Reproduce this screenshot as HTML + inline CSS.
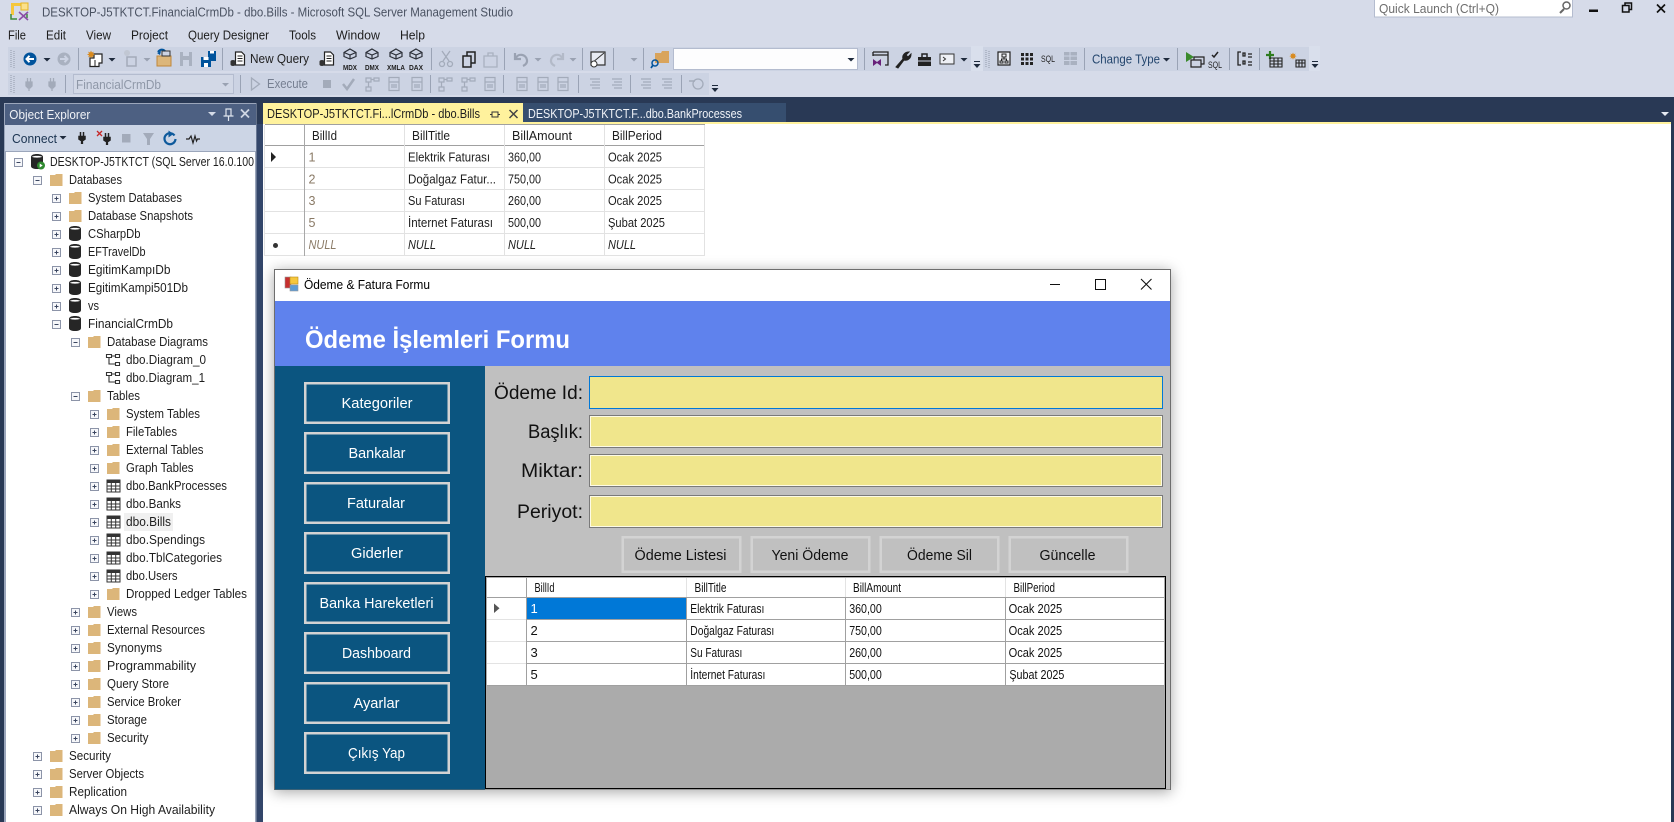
<!DOCTYPE html>
<html lang="tr">
<head>
<meta charset="utf-8">
<title>DESKTOP-J5TKTCT.FinancialCrmDb - dbo.Bills - Microsoft SQL Server Management Studio</title>
<style>
html,body{margin:0;padding:0;background:#fff;width:1674px;height:822px;overflow:hidden}
svg{display:block}
text{font-family:"Liberation Sans","Noto Sans CJK JP",sans-serif;font-size:12.5px;fill:#1e1e1e;white-space:pre}
.ti{fill:#4a5262}
.gr{fill:#8f98a8}
.dk{fill:#1a3350}
.id{fill:#8a7a66}
.it{font-style:italic}
.nb{font-style:italic;fill:#8a7a66}
.wh{fill:#fff;font-size:14.5px}
.lb{fill:#111;font-size:19px}
.ab{fill:#111;font-size:14.5px}
.c{font-size:13px;fill:#111}
.h{font-size:12.5px;fill:#111}
.s{stroke:#9aa3b5;stroke-width:1}
</style>
</head>
<body>
<svg xmlns="http://www.w3.org/2000/svg" width="1674" height="822" viewBox="0 0 1674 822">
<defs>
<symbol id="fo" width="16" height="16" viewBox="0 0 16 16"><path d="M1 15V2h6l1-1h7.500v14z" fill="#fff" opacity=".7"/><path d="M2 4V3h5l1-1h6.500v12H2z" fill="#dcb67a"/></symbol>
<symbol id="db" width="16" height="18" viewBox="0 0 16 18"><path d="M2 4c0-2 2.500-3 6-3s6 1 6 3v9c0 2-2.500 3-6 3s-6-1-6-3z" fill="#262626"/><path d="M3 3.800c1-1.300 9-1.300 10 0-1 1.100-9 1.100-10 0z" fill="#fff"/></symbol>
<symbol id="tb" width="16" height="16" viewBox="0 0 16 16"><path d="M2 2h13v12H2z" fill="#fff" stroke="#333" stroke-width="1"/><path d="M2 2h13v3H2z" fill="#333"/><path d="M2 8h13M2 11h13M6.300 5v9M10.700 5v9" stroke="#333" stroke-width="1" fill="none"/></symbol>
<symbol id="dg" width="16" height="16" viewBox="0 0 16 16"><path d="M1.500 2.500h5v3h-5zM10.500 2.500h4v3h-4zM10.500 10.500h4v3h-4zM4 5.500V12h6.500M6.500 4h4" fill="#fff" stroke="#333" stroke-width="1.100"/></symbol>
<symbol id="pl" width="11" height="11" viewBox="0 0 11 11"><rect x="1.500" y="1.500" width="8" height="8" fill="#f6f7fa" stroke="#8c94a8"/><path d="M3.500 5.500h4M5.500 3.500v4" stroke="#3b4660" stroke-width="1"/></symbol>
<symbol id="mi" width="11" height="11" viewBox="0 0 11 11"><rect x="1.500" y="1.500" width="8" height="8" fill="#f6f7fa" stroke="#8c94a8"/><path d="M3.500 5.500h4" stroke="#3b4660" stroke-width="1"/></symbol>
<symbol id="drp" width="8" height="4" viewBox="0 0 8 4"><path d="M0 0h7L3.500 3.500z" fill="#1e2a3c"/></symbol>
<symbol id="drg" width="8" height="4" viewBox="0 0 8 4"><path d="M0 0h7L3.500 3.500z" fill="#9aa2b2"/></symbol>
<symbol id="ov" width="8" height="8" viewBox="0 0 8 8"><path d="M1 .5h6" stroke="#1e2a3c" stroke-width="1"/><path d="M.5 3h7L4 7z" fill="#1e2a3c"/></symbol>
<symbol id="gp" width="6" height="20" viewBox="0 0 6 20"><path d="M1 1v18M4 2v17" stroke="#a0a8b8" stroke-width="1.300" stroke-dasharray="1 1" fill="none"/></symbol>
<symbol id="cube" width="18" height="18" viewBox="0 0 18 18"><path d="M9 1l6 3.500v4L9 11 3 8.500v-4zM3 4.500L9 7l6-2.500M9 7v4" fill="none" stroke="#2b2f38" stroke-width="1.200"/></symbol>
<symbol id="page" width="18" height="18" viewBox="0 0 18 18"><path d="M6.500 2h6l3 3v10h-9z" fill="#fff" stroke="#222" stroke-width="1.200"/><path d="M8.500 6h5M8.500 8.500h5M8.500 11h5" stroke="#222"/><path d="M1.500 11.500c0-2 5-2 5 0v3c0 2-5 2-5 0z" fill="#333"/></symbol>
<symbol id="gbox" width="16" height="16" viewBox="0 0 16 16"><path d="M2 2h5v4H2zM10 2h5v3h-5zM2 11h5v4H2zM4.500 6v5M7 3.500h3" fill="none" stroke="#a3abba" stroke-width="1.200"/></symbol>
<symbol id="gdoc" width="16" height="16" viewBox="0 0 16 16"><path d="M3 1.500h10v13H3zM5 9h6M5 11h6M3 6h10" fill="none" stroke="#a3abba" stroke-width="1.200"/></symbol>
<symbol id="glist" width="16" height="16" viewBox="0 0 16 16"><path d="M4 3h10M6 6h8M4 9h10M6 12h8" fill="none" stroke="#a3abba" stroke-width="1.300"/></symbol>
<symbol id="gplug" width="16" height="16" viewBox="0 0 16 16"><path d="M5 6h6v4l-2 2H7L5 10zM8 12v3M6.500 2v4M9.500 2v4" fill="#a3abba" stroke="#a3abba" stroke-width="1.300"/></symbol>
<symbol id="plug" width="12" height="14" viewBox="0 0 16 18"><path d="M3 6h10v5l-3 2H6l-3-2zM6.500 13h3v4h-3zM5 1h2v5H5zM9 1h2v5H9z" fill="#222"/></symbol>
</defs>

<!-- app background -->
<rect width="1674" height="97" fill="#d6dbe9"/>
<rect y="97" width="1674" height="725" fill="#293955"/>
<rect x="256" y="124" width="7" height="698" fill="#33466a"/>
<rect x="263" y="124" width="1408" height="698" fill="#fff"/>

<!-- title bar -->
<g>
<path d="M11 3h14v3h-11v9h-3z" fill="#f5c73d"/>
<path d="M21 3h7v7h-7z" fill="#fbe08a" stroke="#e6b422"/>
<path d="M11 14v5h6M27 14v4" stroke="#3c8a3c" stroke-width="1.500" fill="none"/>
<path d="M19 12l9 8M28 12l-9 8" stroke="#8b4ea6" stroke-width="1.600"/>
</g>
<text class="ti" x="42" y="16.500" textLength="471" lengthAdjust="spacingAndGlyphs">DESKTOP-J5TKTCT.FinancialCrmDb - dbo.Bills - Microsoft SQL Server Management Studio</text>
<rect x="1374.500" y="-1" width="198" height="18" fill="#fff" stroke="#b4bccf"/>
<text x="1379" y="13" style="fill:#6d6d6d" textLength="120" lengthAdjust="spacingAndGlyphs">Quick Launch (Ctrl+Q)</text>
<path d="M1560 13l4-4" stroke="#666" stroke-width="2"/><circle cx="1566.500" cy="5.500" r="3.500" fill="none" stroke="#666" stroke-width="1.500"/>
<rect x="1589" y="9.500" width="9" height="2.500" fill="#111"/>
<path d="M1622.500 5.500h6.500v6.500h-6.500z" fill="none" stroke="#111" stroke-width="1.500"/><path d="M1625 5V3h6.500v6.500h-2.500" fill="none" stroke="#111" stroke-width="1.500"/>
<path d="M1657 4.500l8 8M1665 4.500l-8 8" stroke="#111" stroke-width="1.700"/>

<!-- menu -->
<text x="8" y="39.500" textLength="18" lengthAdjust="spacingAndGlyphs">File</text>
<text x="46" y="39.500" textLength="20" lengthAdjust="spacingAndGlyphs">Edit</text>
<text x="86" y="39.500" textLength="25" lengthAdjust="spacingAndGlyphs">View</text>
<text x="131" y="39.500" textLength="37" lengthAdjust="spacingAndGlyphs">Project</text>
<text x="188" y="39.500" textLength="81" lengthAdjust="spacingAndGlyphs">Query Designer</text>
<text x="289" y="39.500" textLength="27" lengthAdjust="spacingAndGlyphs">Tools</text>
<text x="336" y="39.500" textLength="44" lengthAdjust="spacingAndGlyphs">Window</text>
<text x="400" y="39.500" textLength="25" lengthAdjust="spacingAndGlyphs">Help</text>

<!-- toolbars -->
<rect x="8" y="47" width="963" height="24" fill="#ccd3e3"/>
<rect x="971" y="46" width="12" height="25" fill="#d9dfec"/>
<rect x="983" y="47" width="326" height="24" fill="#ccd3e3"/>
<rect x="1309" y="46" width="11" height="25" fill="#d9dfec"/>
<rect x="8" y="73" width="701" height="22" fill="#ccd3e3"/>

<use href="#gp" x="10" y="49"/>
<circle cx="30" cy="59" r="6.500" fill="#00539c"/><path d="M34 59h-7M29.500 55.800L26.500 59l3 3.200" stroke="#fff" stroke-width="2" fill="none"/>
<use href="#drp" x="43.500" y="58"/>
<circle cx="64" cy="59" r="6.500" fill="#a9b1c0"/><path d="M60 59h7M64.500 55.800l3 3.200-3 3.200" stroke="#ccd3e3" stroke-width="2" fill="none"/>
<path class="s" d="M78.500 48v22M222.500 48v22M431.500 48v22M504.500 48v22M582.500 48v22M613.500 48v22M643.500 48v22M864.500 48v22M1084.500 48v22M1177.500 48v22M1229.500 48v22M1259.500 48v22"/>
<path d="M90 58h4v-4h8v9h-3v3.500h-9z" fill="#fff" stroke="#222" stroke-width="1.200"/><path d="M95 60v6.500" stroke="#222"/><path d="M91 50.500l.9 2 2-.9-.9 2 2 .9-2 .9.9 2-2-.9-.9 2-.9-2-2 .9.9-2-2-.9 2-.9-.9-2 2 .9z" fill="#d88a1e"/>
<use href="#drp" x="108.500" y="58"/>
<path d="M127 57h9v9h-9z" fill="none" stroke="#a3abba" stroke-width="1.500"/><circle cx="127" cy="53" r="3" fill="#c1c7d3"/>
<use href="#drg" x="143.500" y="58"/>
<path d="M157 56h14v10h-14z" fill="#dcb67a" stroke="#c0873a"/><path d="M158 52c2-3 5-3 7-1" stroke="#00539c" stroke-width="2" fill="none"/><path d="M157 53l4-2-1 4z" fill="#00539c"/><path d="M162 51h8v5h-8z" fill="none" stroke="#333"/>
<path d="M180 52h12v14h-12z" fill="#a9b1c0"/><path d="M183 52h6v4h-6z" fill="#ccd3e3"/><path d="M183 60h6v6h-6z" fill="#ccd3e3"/>
<path d="M201 57h10v10h-10z" fill="#00539c"/><path d="M203.500 57h5v3h-5zM204 63h4v4h-4z" fill="#fff"/><path d="M208 51h8v10h-5v-4h-3z" fill="#00539c"/><path d="M210 51h4v2.500h-4z" fill="#fff"/>
<use href="#page" x="229" y="50"/>
<text x="250" y="63" textLength="59" lengthAdjust="spacingAndGlyphs">New Query</text>
<use href="#page" x="318" y="50"/>
<g>
<use href="#cube" x="341" y="48"/><text x="343" y="70" textLength="14" lengthAdjust="spacingAndGlyphs" style="font-size:7px;font-weight:bold">MDX</text>
<use href="#cube" x="363" y="48"/><text x="365" y="70" textLength="14" lengthAdjust="spacingAndGlyphs" style="font-size:7px;font-weight:bold">DMX</text>
<use href="#cube" x="387" y="48"/><text x="387" y="70" textLength="18" lengthAdjust="spacingAndGlyphs" style="font-size:7px;font-weight:bold">XMLA</text>
<use href="#cube" x="407" y="48"/><text x="409" y="70" textLength="14" lengthAdjust="spacingAndGlyphs" style="font-size:7px;font-weight:bold">DAX</text>
</g>
<g fill="none" stroke="#a3abba" stroke-width="1.300"><path d="M442 51l7 10M450 51l-7 10"/><circle cx="442" cy="64" r="2.500"/><circle cx="450" cy="64" r="2.500"/></g>
<path d="M463 56h8v11h-8zM467 56v-4h8v11h-4" fill="none" stroke="#222" stroke-width="1.500"/>
<path d="M484 56h13v11h-13zM488 56v-3h5v3" fill="none" stroke="#a9b1c0" stroke-width="1.300"/>
<path d="M515 53v6h6M516 58c2-5 10-4 11 2 .5 3-2 5-4 6" fill="none" stroke="#9aa2b2" stroke-width="2.200"/>
<use href="#drg" x="534.500" y="58"/>
<path d="M563 53v6h-6M562 58c-2-5-10-4-11 2-.5 3 2 5 4 6" fill="none" stroke="#b3bac8" stroke-width="2.200"/>
<use href="#drg" x="569.500" y="58"/>
<path d="M591 52h14v13h-14z" fill="#e8ebf3" stroke="#333" stroke-width="1.200"/><path d="M592 63l12-10" stroke="#333"/><circle cx="594" cy="64" r="3" fill="#fff" stroke="#333"/>
<use href="#drg" x="630.500" y="58"/>
<path d="M655 53h6l1-2h7v12h-14z" fill="#d9a45c"/><circle cx="655" cy="63" r="3" fill="none" stroke="#00539c" stroke-width="1.500"/><path d="M653 65l-2 3" stroke="#00539c" stroke-width="1.700"/>
<rect x="673.500" y="48.500" width="184" height="21" fill="#fdfdfe" stroke="#b4bccf"/>
<use href="#drp" x="847.500" y="58"/>
<path d="M873 52h15v13h-3M873 55h15M873 52v4" fill="none" stroke="#222" stroke-width="1.300"/><path d="M873 59l4 3 4-3v7l-4-3-4 3z" fill="#68217a"/>
<path d="M896 67l7-8c-1-3 1-7 6-7l-3 3 2 2 3-3c0 5-4 7-7 6l-6 8z" fill="#222" stroke="#222"/>
<path d="M918 57h13v9h-13z" fill="#222"/><path d="M922 57v-3h5v3" stroke="#222" fill="none" stroke-width="1.500"/><path d="M918 61h13" stroke="#ccd3e3"/>
<path d="M940 54h14v10h-14z" fill="#eef0f5" stroke="#333"/><path d="M943 57l2.500 2-2.500 2" stroke="#333" fill="none"/>
<use href="#drp" x="960.500" y="58"/>
<use href="#ov" x="973" y="61"/>
<use href="#gp" x="985" y="49"/>
<path d="M998 52h12v13h-12z" fill="#eef0f5" stroke="#222" stroke-width="1.200"/><path d="M1002 54h4v3h-4zM1000 61h3v2h-3zM1005 61h3v2h-3zM1004 57v2M1001.500 61v-2h5v2" stroke="#222" fill="none"/>
<path d="M1021 53h3v3h-3zM1025.500 53h3v3h-3zM1030 53h3v3h-3zM1021 57.500h3v3h-3zM1025.500 57.500h3v3h-3zM1030 57.500h3v3h-3zM1021 62h3v3h-3zM1025.500 62h3v3h-3zM1030 62h3v3h-3z" fill="#222"/>
<text x="1041" y="62" textLength="14" lengthAdjust="spacingAndGlyphs" style="font-size:9px">SQL</text>
<path d="M1064 52h13v13h-13z" fill="#a9b1c0"/><path d="M1064 56h13M1064 60.500h13M1070 52v13" stroke="#ccd3e3"/>
<text style="fill:#24466e" x="1092" y="63.500" textLength="68" lengthAdjust="spacingAndGlyphs">Change Type</text>
<use href="#drp" x="1163" y="58"/>
<path d="M1186 52l8 5-8 5z" fill="#3a8a2c"/><path d="M1191 60h10v7h-10zM1194 60v-3h10v7h-3" fill="none" stroke="#222" stroke-width="1.200"/>
<path d="M1212 55l2 2 4-5" fill="none" stroke="#222" stroke-width="1.500"/>
<text x="1208" y="68" textLength="14" lengthAdjust="spacingAndGlyphs" style="font-size:9px">SQL</text>
<path d="M1241 52h-3v13h3M1243 53h2v3h-2zM1243 61h2v3h-2zM1248 54h4M1248 62h4M1248 57h4M1248 65h4" fill="none" stroke="#222" stroke-width="1.300"/>
<path d="M1270 51v8M1266 55h8" stroke="#2e7d1e" stroke-width="2.200"/>
<path d="M1270 58h12v9h-12zM1270 61h12M1270 64h12M1274 58v9M1278 58v9" fill="none" stroke="#222" stroke-width="1.100"/>
<path d="M1293 52.500l.8 1.800 1.800-.8-.8 1.800 1.800.8-1.800.8.8 1.800-1.800-.8-.8 1.800-.8-1.800-1.800.8.8-1.800-1.800-.8 1.800-.8-.8-1.800 1.800.8z" fill="#d88a1e"/>
<path d="M1296 60h9v7h-9zM1296 63h9M1299 60v7M1302 60v7" fill="none" stroke="#222" stroke-width="1.100"/>
<use href="#ov" x="1311" y="61"/>

<!-- toolbar 2 -->
<use href="#gp" x="10" y="74"/>
<use href="#gplug" x="21" y="76"/>
<use href="#gplug" x="44" y="76"/>
<path class="s" d="M65.500 75v18M240.500 75v18M430.500 75v18M503.500 75v18M578.500 75v18M630.500 75v18M681.500 75v18"/>
<rect x="73.500" y="74.500" width="160" height="19" fill="#d2d8e6" stroke="#b4bccf"/>
<text class="gr" x="76" y="89" textLength="85" lengthAdjust="spacingAndGlyphs">FinancialCrmDb</text>
<use href="#drg" x="222" y="83"/>
<path d="M251.500 78l8 6-8 6z" fill="none" stroke="#a3abba" stroke-width="1.300"/>
<text x="267" y="88" textLength="41" lengthAdjust="spacingAndGlyphs" style="fill:#767f91">Execute</text>
<rect x="323" y="80" width="8" height="8" fill="#a3abba"/>
<path d="M343 84l4 5 7-10" fill="none" stroke="#a3abba" stroke-width="2.500"/>
<use href="#gbox" x="364" y="76"/><use href="#gdoc" x="386" y="76"/><use href="#gdoc" x="409" y="76"/>
<use href="#gbox" x="437" y="76"/><use href="#gbox" x="460" y="76"/><use href="#gdoc" x="482" y="76"/>
<use href="#gdoc" x="514" y="76"/><use href="#gdoc" x="535" y="76"/><use href="#gdoc" x="555" y="76"/>
<use href="#glist" x="586" y="76"/><use href="#glist" x="608" y="76"/>
<use href="#glist" x="637" y="76"/><use href="#glist" x="658" y="76"/>
<circle cx="698" cy="84" r="5" fill="none" stroke="#a3abba" stroke-width="1.300"/><path d="M689 81h6" stroke="#a3abba" stroke-width="1.500"/>
<use href="#ov" x="711" y="85"/>

<!-- document tabs -->
<rect x="263" y="103" width="260" height="20" fill="#fff29d"/>
<rect x="523" y="103" width="263" height="19" fill="#364e6f"/>
<rect x="263" y="122" width="1408" height="2" fill="#fff29d"/>
<text x="267" y="118" textLength="213" lengthAdjust="spacingAndGlyphs">DESKTOP-J5TKTCT.Fi...lCrmDb - dbo.Bills</text>
<path d="M492 111.500v6M492 114.500h-2M492 112h6v5h-6M498 114.500h2" stroke="#333" fill="none"/>
<path d="M509.500 110l8 8M517.500 110l-8 8" stroke="#444" stroke-width="1.500"/>
<text x="528" y="118" textLength="214" lengthAdjust="spacingAndGlyphs" style="fill:#f0f3f8">DESKTOP-J5TKTCT.F...dbo.BankProcesses</text>
<path d="M1661 112h8l-4 4z" fill="#e6eaf2"/>

<!-- top results grid -->
<g>
<path d="M265 124.500h440" stroke="#a0a0a0"/>
<path d="M265 145.500h440" stroke="#a0a0a0"/>
<path d="M265 167.500h440M265 189.500h440M265 211.500h440M265 233.500h440M265 255.500h440" stroke="#e2e2e2"/>
<path d="M404.500 125v131M504.500 125v131M604.500 125v131M704.500 125v131M264.500 125v131" stroke="#e2e2e2"/>
<path d="M304.500 125v131" stroke="#a8a8a8"/>
<text x="312" y="140" textLength="25" lengthAdjust="spacingAndGlyphs">BillId</text>
<text x="412" y="140" textLength="38" lengthAdjust="spacingAndGlyphs">BillTitle</text>
<text x="512" y="140" textLength="60" lengthAdjust="spacingAndGlyphs">BillAmount</text>
<text x="612" y="140" textLength="50" lengthAdjust="spacingAndGlyphs">BillPeriod</text>
<path d="M271 152v10l5-5z" fill="#222"/>
<circle cx="275.500" cy="245.500" r="2.500" fill="#333"/>
<text class="id" x="308.500" y="161.500">1</text><text class="id" x="308.500" y="183.500">2</text><text class="id" x="308.500" y="205">3</text><text class="id" x="308.500" y="227">5</text>
<text x="408" y="161.500" textLength="82" lengthAdjust="spacingAndGlyphs">Elektrik Faturası</text>
<text x="408" y="183.500" textLength="88" lengthAdjust="spacingAndGlyphs">Doğalgaz Fatur...</text>
<text x="408" y="205" textLength="57" lengthAdjust="spacingAndGlyphs">Su Faturası</text>
<text x="408" y="227" textLength="85" lengthAdjust="spacingAndGlyphs">İnternet Faturası</text>
<text x="508" y="161.500" textLength="33" lengthAdjust="spacingAndGlyphs">360,00</text>
<text x="508" y="183.500" textLength="33" lengthAdjust="spacingAndGlyphs">750,00</text>
<text x="508" y="205" textLength="33" lengthAdjust="spacingAndGlyphs">260,00</text>
<text x="508" y="227" textLength="33" lengthAdjust="spacingAndGlyphs">500,00</text>
<text x="608" y="161.500" textLength="54" lengthAdjust="spacingAndGlyphs">Ocak 2025</text>
<text x="608" y="183.500" textLength="54" lengthAdjust="spacingAndGlyphs">Ocak 2025</text>
<text x="608" y="205" textLength="54" lengthAdjust="spacingAndGlyphs">Ocak 2025</text>
<text x="608" y="227" textLength="57" lengthAdjust="spacingAndGlyphs">Şubat 2025</text>
<text class="nb" x="308.500" y="249" textLength="28" lengthAdjust="spacingAndGlyphs">NULL</text>
<text class="it" x="408" y="249" textLength="28" lengthAdjust="spacingAndGlyphs">NULL</text>
<text class="it" x="508" y="249" textLength="28" lengthAdjust="spacingAndGlyphs">NULL</text>
<text class="it" x="608" y="249" textLength="28" lengthAdjust="spacingAndGlyphs">NULL</text>
</g>

<!-- object explorer -->
<rect x="4" y="103" width="252.500" height="719" fill="#9ba6bb"/>
<rect x="5" y="104" width="251" height="21" fill="#4d6082"/>
<rect x="5" y="125" width="251" height="26" fill="#ccd5e5"/>
<rect x="6" y="152" width="249" height="670" fill="#fff"/>
<text x="9.300" y="119" textLength="81" lengthAdjust="spacingAndGlyphs" style="fill:#f0f2f7;font-size:13px">Object Explorer</text>
<path d="M208 112h8l-4 4z" fill="#d5dbe7"/>
<path d="M226 109h5v7h-5zM223.500 116h10M228.500 116v5" stroke="#e0e5ee" stroke-width="1.200" fill="none"/>
<path d="M241 109.500l8 8M249 109.500l-8 8" stroke="#cfd6e3" stroke-width="1.800"/>
<text class="dk" x="12" y="143" textLength="45" lengthAdjust="spacingAndGlyphs">Connect</text>
<use href="#drp" x="59.500" y="136"/>
<use href="#plug" x="76" y="131"/>
<path d="M97 131l5 5M102 131l-5 5" stroke="#c62828" stroke-width="1.300"/>
<use href="#plug" x="101" y="132"/>
<rect x="122" y="134" width="8.500" height="8.500" fill="#a3abba"/>
<path d="M143 133h11l-4 6v6h-3v-6z" fill="#a3abba"/>
<path d="M174.500 135.500a5.500 5.500 0 1 0 1 3.500" fill="none" stroke="#0e5a9c" stroke-width="2.200"/><path d="M168.500 130.500v7l5-3.500z" fill="#0e5a9c"/>
<path d="M186 139h3l2-3 2 7 2-7 1.500 5 1-2h2.500" fill="none" stroke="#222" stroke-width="1.200"/>

<!-- tree -->
<g>
<use href="#mi" x="13" y="157"/>
<use href="#db" x="29" y="153"/>
<circle cx="41" cy="165.500" r="4" fill="#2f8a2f"/><path d="M39.700 163.500l3 2-3 2z" fill="#fff"/>
<text x="50" y="166" textLength="204" lengthAdjust="spacingAndGlyphs">DESKTOP-J5TKTCT (SQL Server 16.0.100</text>

<use href="#mi" x="32" y="175"/><use href="#fo" x="48" y="172"/><text x="69" y="184" textLength="53" lengthAdjust="spacingAndGlyphs">Databases</text>

<use href="#pl" x="51" y="193"/><use href="#fo" x="67" y="190"/><text x="88" y="202" textLength="94" lengthAdjust="spacingAndGlyphs">System Databases</text>
<use href="#pl" x="51" y="211"/><use href="#fo" x="67" y="208"/><text x="88" y="220" textLength="105" lengthAdjust="spacingAndGlyphs">Database Snapshots</text>
<use href="#pl" x="51" y="229"/><use href="#db" x="67" y="225"/><text x="88" y="238" textLength="52.500" lengthAdjust="spacingAndGlyphs">CSharpDb</text>
<use href="#pl" x="51" y="247"/><use href="#db" x="67" y="243"/><text x="88" y="256" textLength="57.500" lengthAdjust="spacingAndGlyphs">EFTravelDb</text>
<use href="#pl" x="51" y="265"/><use href="#db" x="67" y="261"/><text x="88" y="274" textLength="82.500" lengthAdjust="spacingAndGlyphs">EgitimKampıDb</text>
<use href="#pl" x="51" y="283"/><use href="#db" x="67" y="279"/><text x="88" y="292" textLength="100" lengthAdjust="spacingAndGlyphs">EgitimKampi501Db</text>
<use href="#pl" x="51" y="301"/><use href="#db" x="67" y="297"/><text x="88" y="310" textLength="11" lengthAdjust="spacingAndGlyphs">vs</text>
<use href="#mi" x="51" y="319"/><use href="#db" x="67" y="315"/><text x="88" y="328" textLength="85" lengthAdjust="spacingAndGlyphs">FinancialCrmDb</text>

<use href="#mi" x="70" y="337"/><use href="#fo" x="86" y="334"/><text x="107" y="346" textLength="101" lengthAdjust="spacingAndGlyphs">Database Diagrams</text>
<use href="#dg" x="105" y="352"/><text x="126" y="364" textLength="80" lengthAdjust="spacingAndGlyphs">dbo.Diagram_0</text>
<use href="#dg" x="105" y="370"/><text x="126" y="382" textLength="79" lengthAdjust="spacingAndGlyphs">dbo.Diagram_1</text>
<use href="#mi" x="70" y="391"/><use href="#fo" x="86" y="388"/><text x="107" y="400" textLength="33" lengthAdjust="spacingAndGlyphs">Tables</text>

<use href="#pl" x="89" y="409"/><use href="#fo" x="105" y="406"/><text x="126" y="418" textLength="74" lengthAdjust="spacingAndGlyphs">System Tables</text>
<use href="#pl" x="89" y="427"/><use href="#fo" x="105" y="424"/><text x="126" y="436" textLength="51" lengthAdjust="spacingAndGlyphs">FileTables</text>
<use href="#pl" x="89" y="445"/><use href="#fo" x="105" y="442"/><text x="126" y="454" textLength="77.500" lengthAdjust="spacingAndGlyphs">External Tables</text>
<use href="#pl" x="89" y="463"/><use href="#fo" x="105" y="460"/><text x="126" y="472" textLength="67.500" lengthAdjust="spacingAndGlyphs">Graph Tables</text>
<use href="#pl" x="89" y="481"/><use href="#tb" x="105" y="478"/><text x="126" y="490" textLength="101" lengthAdjust="spacingAndGlyphs">dbo.BankProcesses</text>
<use href="#pl" x="89" y="499"/><use href="#tb" x="105" y="496"/><text x="126" y="508" textLength="55" lengthAdjust="spacingAndGlyphs">dbo.Banks</text>
<use href="#pl" x="89" y="517"/><use href="#tb" x="105" y="514"/>
<rect x="124" y="513" width="49" height="18" fill="#f0f0f0"/><text x="126" y="526" textLength="45" lengthAdjust="spacingAndGlyphs">dbo.Bills</text>
<use href="#pl" x="89" y="535"/><use href="#tb" x="105" y="532"/><text x="126" y="544" textLength="79" lengthAdjust="spacingAndGlyphs">dbo.Spendings</text>
<use href="#pl" x="89" y="553"/><use href="#tb" x="105" y="550"/><text x="126" y="562" textLength="96" lengthAdjust="spacingAndGlyphs">dbo.TblCategories</text>
<use href="#pl" x="89" y="571"/><use href="#tb" x="105" y="568"/><text x="126" y="580" textLength="51.500" lengthAdjust="spacingAndGlyphs">dbo.Users</text>
<use href="#pl" x="89" y="589"/><use href="#fo" x="105" y="586"/><text x="126" y="598" textLength="121" lengthAdjust="spacingAndGlyphs">Dropped Ledger Tables</text>

<use href="#pl" x="70" y="607"/><use href="#fo" x="86" y="604"/><text x="107" y="616" textLength="30" lengthAdjust="spacingAndGlyphs">Views</text>
<use href="#pl" x="70" y="625"/><use href="#fo" x="86" y="622"/><text x="107" y="634" textLength="98" lengthAdjust="spacingAndGlyphs">External Resources</text>
<use href="#pl" x="70" y="643"/><use href="#fo" x="86" y="640"/><text x="107" y="652" textLength="55" lengthAdjust="spacingAndGlyphs">Synonyms</text>
<use href="#pl" x="70" y="661"/><use href="#fo" x="86" y="658"/><text x="107" y="670" textLength="89" lengthAdjust="spacingAndGlyphs">Programmability</text>
<use href="#pl" x="70" y="679"/><use href="#fo" x="86" y="676"/><text x="107" y="688" textLength="62" lengthAdjust="spacingAndGlyphs">Query Store</text>
<use href="#pl" x="70" y="697"/><use href="#fo" x="86" y="694"/><text x="107" y="706" textLength="74" lengthAdjust="spacingAndGlyphs">Service Broker</text>
<use href="#pl" x="70" y="715"/><use href="#fo" x="86" y="712"/><text x="107" y="724" textLength="40" lengthAdjust="spacingAndGlyphs">Storage</text>
<use href="#pl" x="70" y="733"/><use href="#fo" x="86" y="730"/><text x="107" y="742" textLength="41.500" lengthAdjust="spacingAndGlyphs">Security</text>

<use href="#pl" x="32" y="751"/><use href="#fo" x="48" y="748"/><text x="69" y="760" textLength="42" lengthAdjust="spacingAndGlyphs">Security</text>
<use href="#pl" x="32" y="769"/><use href="#fo" x="48" y="766"/><text x="69" y="778" textLength="75" lengthAdjust="spacingAndGlyphs">Server Objects</text>
<use href="#pl" x="32" y="787"/><use href="#fo" x="48" y="784"/><text x="69" y="796" textLength="58" lengthAdjust="spacingAndGlyphs">Replication</text>
<use href="#pl" x="32" y="805"/><use href="#fo" x="48" y="802"/><text x="69" y="814" textLength="146" lengthAdjust="spacingAndGlyphs">Always On High Availability</text>
</g>

<!-- WinForms window -->
<rect x="274.500" y="269.500" width="896" height="520" fill="#fff" stroke="#6e6e6e" style="filter:drop-shadow(0 2px 7px rgba(0,0,0,.35))"/>
<rect x="285" y="277" width="6" height="11" fill="#c62f2f" stroke="#999" stroke-width=".6"/>
<rect x="290" y="277" width="8" height="7" fill="#f5c73d" stroke="#b98a1a" stroke-width=".6"/>
<rect x="290" y="285" width="8" height="6" fill="#5b9bd5" stroke="#999" stroke-width=".6"/>
<text x="304" y="289" textLength="126" lengthAdjust="spacingAndGlyphs" style="fill:#000">Ödeme &amp; Fatura Formu</text>
<rect x="1050" y="284" width="10" height="1" fill="#111"/>
<rect x="1095.500" y="279.500" width="10" height="10" fill="none" stroke="#111"/>
<path d="M1141 279l10.500 10.500M1151.500 279L1141 289.500" stroke="#111" stroke-width="1.100"/>

<rect x="275" y="301" width="895" height="65" fill="#5f82ed"/>
<text x="305" y="348" textLength="265" lengthAdjust="spacingAndGlyphs" style="fill:#fff;font-size:25px;font-weight:bold">Ödeme İşlemleri Formu</text>

<rect x="275" y="366" width="210" height="423.500" fill="#0b5580"/>
<rect x="485" y="366" width="685" height="423.500" fill="#c0c0c0"/>

<!-- sidebar buttons -->
<g fill="none" stroke="#d3d3d3" stroke-width="2.500">
<rect x="305.250" y="383.250" width="143.500" height="39.500"/>
<rect x="305.250" y="433.250" width="143.500" height="39.500"/>
<rect x="305.250" y="483.250" width="143.500" height="39.500"/>
<rect x="305.250" y="533.250" width="143.500" height="39.500"/>
<rect x="305.250" y="583.250" width="143.500" height="39.500"/>
<rect x="305.250" y="633.250" width="143.500" height="39.500"/>
<rect x="305.250" y="683.250" width="143.500" height="39.500"/>
<rect x="305.250" y="733.250" width="143.500" height="39.500"/>
</g>
<text class="wh" x="341.500" y="408" textLength="71" lengthAdjust="spacingAndGlyphs">Kategoriler</text>
<text class="wh" x="348.500" y="458" textLength="57" lengthAdjust="spacingAndGlyphs">Bankalar</text>
<text class="wh" x="347" y="508" textLength="58" lengthAdjust="spacingAndGlyphs">Faturalar</text>
<text class="wh" x="351" y="558" textLength="52" lengthAdjust="spacingAndGlyphs">Giderler</text>
<text class="wh" x="319.500" y="608" textLength="114" lengthAdjust="spacingAndGlyphs">Banka Hareketleri</text>
<text class="wh" x="342" y="658" textLength="69" lengthAdjust="spacingAndGlyphs">Dashboard</text>
<text class="wh" x="353.500" y="708" textLength="46" lengthAdjust="spacingAndGlyphs">Ayarlar</text>
<text class="wh" x="348" y="758" textLength="57" lengthAdjust="spacingAndGlyphs">Çıkış Yap</text>

<!-- form labels -->
<text class="lb" x="494" y="399" textLength="89" lengthAdjust="spacingAndGlyphs">Ödeme Id:</text>
<text class="lb" x="528" y="438" textLength="55" lengthAdjust="spacingAndGlyphs">Başlık:</text>
<text class="lb" x="521" y="477" textLength="62" lengthAdjust="spacingAndGlyphs">Miktar:</text>
<text class="lb" x="517" y="518" textLength="66" lengthAdjust="spacingAndGlyphs">Periyot:</text>

<!-- inputs -->
<rect x="589.500" y="376.500" width="573" height="32" fill="#f0e68c" stroke="#0078d7"/>
<rect x="589.500" y="415.500" width="573" height="32" fill="#f0e68c" stroke="#7a7a7a"/>
<rect x="590.500" y="416.500" width="571" height="30" fill="none" stroke="#fdfbe6"/>
<rect x="589.500" y="454.500" width="573" height="32" fill="#f0e68c" stroke="#7a7a7a"/>
<rect x="590.500" y="455.500" width="571" height="30" fill="none" stroke="#fdfbe6"/>
<rect x="589.500" y="495.500" width="573" height="32" fill="#f0e68c" stroke="#7a7a7a"/>
<rect x="590.500" y="496.500" width="571" height="30" fill="none" stroke="#fdfbe6"/>

<!-- action buttons -->
<g fill="#c0c0c0" stroke="#d3d3d3" stroke-width="2.500">
<rect x="622.750" y="537.250" width="117.500" height="34.500"/>
<rect x="751.750" y="537.250" width="117.500" height="34.500"/>
<rect x="880.750" y="537.250" width="117.500" height="34.500"/>
<rect x="1009.750" y="537.250" width="117.500" height="34.500"/>
</g>
<text class="ab" x="634.500" y="560" textLength="92" lengthAdjust="spacingAndGlyphs">Ödeme Listesi</text>
<text class="ab" x="771.500" y="560" textLength="77" lengthAdjust="spacingAndGlyphs">Yeni Ödeme</text>
<text class="ab" x="907" y="560" textLength="65" lengthAdjust="spacingAndGlyphs">Ödeme Sil</text>
<text class="ab" x="1039.500" y="560" textLength="56" lengthAdjust="spacingAndGlyphs">Güncelle</text>

<!-- DataGridView -->
<rect x="485.500" y="576.500" width="680" height="212" fill="#ababab" stroke="#000" stroke-width="1"/>
<rect x="487" y="578" width="677" height="107" fill="#fff"/>
<rect x="527" y="598" width="159" height="21" fill="#0078d7"/>
<path d="M487 597.500h677M527 619.500h637M527 641.500h637M527 663.500h637M487 685.500h677" stroke="#a0a0a0"/>
<path d="M487 619.500h39M487 641.500h39M487 663.500h39" stroke="#e3e3e3"/>
<path d="M526.500 578v108M686.500 598v88M845.500 598v88M1005.500 598v88" stroke="#a0a0a0"/>
<path d="M686.500 578v19M845.500 578v19M1005.500 578v19" stroke="#e3e3e3"/>
<path d="M494 603.500v9.500l5.500-4.750z" fill="#555"/>
<text class="h" x="534.500" y="592" textLength="20" lengthAdjust="spacingAndGlyphs">BillId</text>
<text class="h" x="694.500" y="592" textLength="32" lengthAdjust="spacingAndGlyphs">BillTitle</text>
<text class="h" x="853" y="592" textLength="48" lengthAdjust="spacingAndGlyphs">BillAmount</text>
<text class="h" x="1013.500" y="592" textLength="41.500" lengthAdjust="spacingAndGlyphs">BillPeriod</text>

<text class="c" x="530.500" y="613" style="fill:#fff">1</text>
<text class="c" x="530.500" y="635">2</text>
<text class="c" x="530.500" y="657">3</text>
<text class="c" x="530.500" y="679">5</text>
<text class="c" x="690.300" y="613" textLength="74" lengthAdjust="spacingAndGlyphs">Elektrik Faturası</text>
<text class="c" x="690.300" y="635" textLength="84" lengthAdjust="spacingAndGlyphs">Doğalgaz Faturası</text>
<text class="c" x="690.300" y="657" textLength="52" lengthAdjust="spacingAndGlyphs">Su Faturası</text>
<text class="c" x="690.300" y="679" textLength="75" lengthAdjust="spacingAndGlyphs">İnternet Faturası</text>
<text class="c" x="849.200" y="613" textLength="32.600" lengthAdjust="spacingAndGlyphs">360,00</text>
<text class="c" x="849.200" y="635" textLength="32.600" lengthAdjust="spacingAndGlyphs">750,00</text>
<text class="c" x="849.200" y="657" textLength="32.600" lengthAdjust="spacingAndGlyphs">260,00</text>
<text class="c" x="849.200" y="679" textLength="32.600" lengthAdjust="spacingAndGlyphs">500,00</text>
<text class="c" x="1008.600" y="613" textLength="53.600" lengthAdjust="spacingAndGlyphs">Ocak 2025</text>
<text class="c" x="1008.600" y="635" textLength="53.600" lengthAdjust="spacingAndGlyphs">Ocak 2025</text>
<text class="c" x="1008.600" y="657" textLength="53.600" lengthAdjust="spacingAndGlyphs">Ocak 2025</text>
<text class="c" x="1009.400" y="679" textLength="55" lengthAdjust="spacingAndGlyphs">Şubat 2025</text>
</svg>
</body>
</html>
